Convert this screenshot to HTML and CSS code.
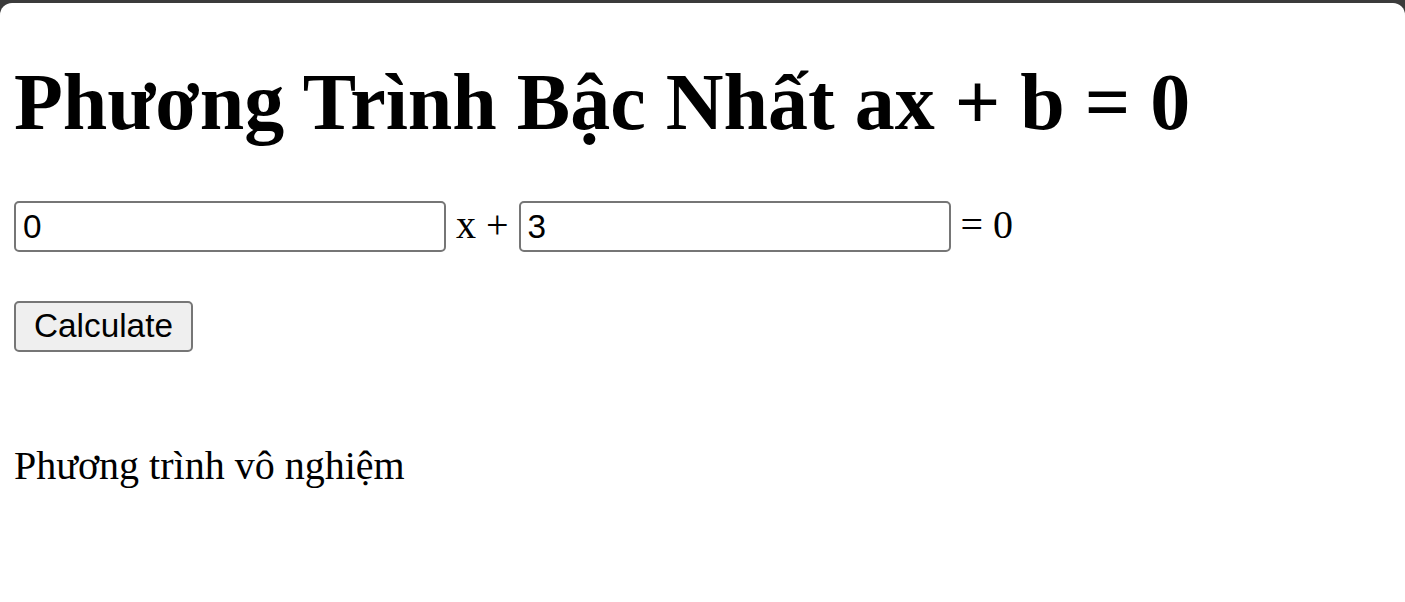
FILE: index.html
```html
<!DOCTYPE html>
<html lang="vi">
<head>
<meta charset="utf-8">
<title>Phương Trình Bậc Nhất</title>
<link rel="stylesheet" href="styles.css">
</head>
<body>
<main class="page">
  <h1 class="title">Phương Trình Bậc Nhất ax + b = 0</h1>
  <form class="equation">
    <div class="equation-row"><input class="coef" type="text" value="0"> x + <input class="coef" type="text" value="3"> = 0</div>
    <div class="actions"><button class="calc" type="button">Calculate</button></div>
  </form>
  <p class="result">Phương trình vô nghiệm</p>
</main>
</body>
</html>
```

FILE: styles.css
```css
html {
  background: #3b3b3b;
  height: 100%;
}

body {
  margin: 3px 0 0 0;
  min-height: calc(100% - 3px);
  background: #ffffff;
  border-top-left-radius: 12px;
  border-top-right-radius: 12px;
  display: flow-root;
  font-family: "Liberation Serif", "Times New Roman", serif;
  font-size: 40px;
  color: #000;
}

.page {
  padding: 0 14px;
}

.title {
  font-size: 80px;
  font-weight: bold;
  margin: 53.6px 0 53px;
}

.equation {
  margin: 0;
}

.equation-row {
  white-space: nowrap;
}

.coef {
  font-family: "Liberation Sans", Arial, sans-serif;
  font-size: 33.33px;
  color: #000;
  width: 432px;
  height: 51px;
  box-sizing: border-box;
  border: 2px solid #767676;
  border-radius: 5px;
  padding: 0 7px;
  margin: 0;
  background: #fff;
  vertical-align: baseline;
}

.actions {
  margin-top: 48px;
}

.calc {
  font-family: "Liberation Sans", Arial, sans-serif;
  font-size: 33.33px;
  color: #000;
  height: 51px;
  box-sizing: border-box;
  border: 2px solid #767676;
  border-radius: 5px;
  background: #efefef;
  padding: 0 18px;
  margin: 0;
}

.result {
  margin: 90px 0 0;
}
```
